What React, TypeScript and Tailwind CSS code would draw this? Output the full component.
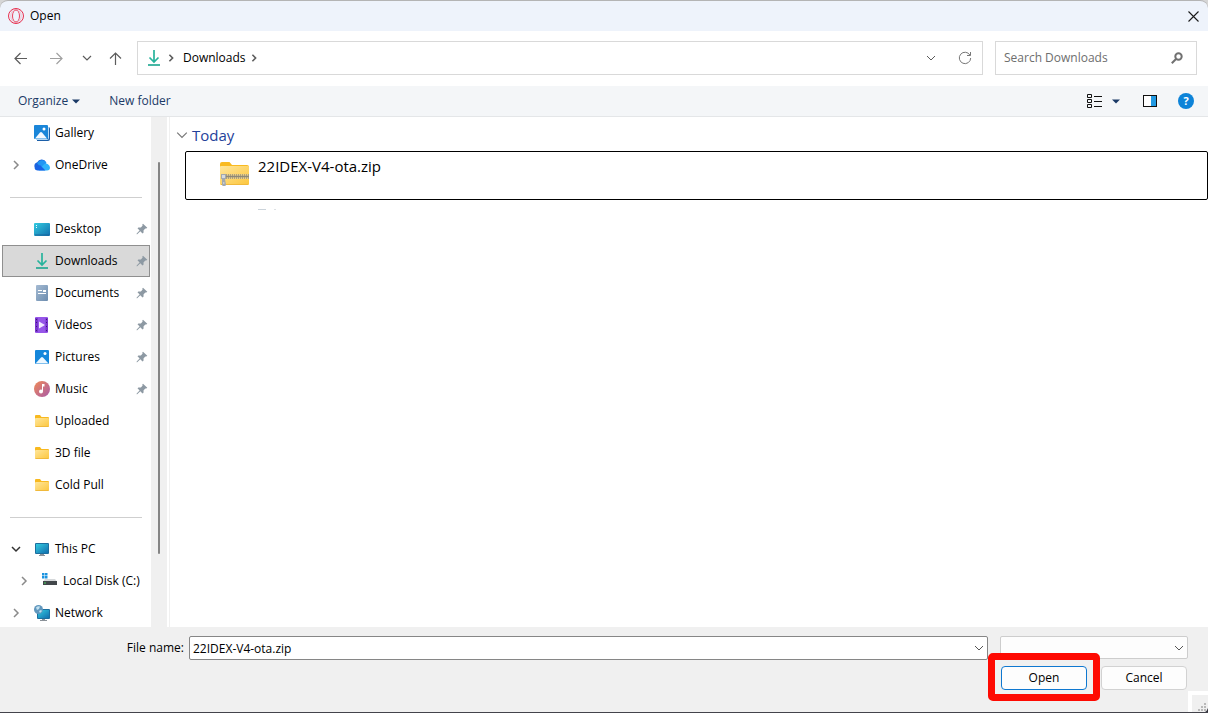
import { useState } from "react";
import type { ReactNode } from "react";

interface ChevronProps {
	direction: "down" | "right";
	size?: number;
	className?: string;
}

const Chevron = ({ direction, size = 10, className }: ChevronProps) => (
	<svg
		className={className}
		width={size}
		height={size}
		viewBox="0 0 10 10"
		fill="none"
		stroke="currentColor"
		aria-hidden="true"
	>
		<path d={direction === "down" ? "M1 3l4 4 4-4" : "M3 1l4 4-4 4"} />
	</svg>
);

const OperaLogo = () => (
	<svg width="16" height="16" viewBox="0 0 16 16" fill="none" stroke="#e8304f" aria-hidden="true">
		<circle cx="8" cy="8" r="7.5" strokeWidth="1" />
		<ellipse cx="8" cy="8" rx="5.2" ry="7" strokeWidth="0.5" opacity="0.5" />
		<ellipse cx="8" cy="8" rx="3.5" ry="6" strokeWidth="0.9" />
	</svg>
);

const GalleryIcon = () => (
	<svg width="16" height="16" viewBox="0 0 16 16" aria-hidden="true">
		<path d="M3 2h11.5A1.5 1.5 0 0 1 16 3.500V14a2 2 0 0 1-2 2H3z" fill="#1b5fa8" />
		<path d="M14.500 2v11.500a1 1 0 0 1-1 1H2" stroke="#b4d8f4" fill="none" />
		<rect width="14" height="14" rx="1" fill="#1a86d9" />
		<circle cx="10" cy="4" r="1.500" fill="#fff" />
		<path d="M1 13.500l5-6q1-1 2 0l5 6z" fill="#f3f9ff" />
	</svg>
);

const OneDriveIcon = () => (
	<svg width="16" height="16" viewBox="0 0 16 16" aria-hidden="true">
		<path d="M4 13a4 4 0 0 1-.8-7.800A5 5 0 0 1 12.200 5.600L8 13z" fill="#1c63dd" />
		<path d="M5 4.200A5 5 0 0 1 12.500 6L7 11 3 6z" fill="#2196f3" />
		<path d="M4.500 13.500L10 7.200a4 4 0 0 1 6 3.300 3 3 0 0 1-3 3z" fill="#30b3fb" />
		<path d="M.5 11.500L6 8l5.500 5.500H4a3.500 3.500 0 0 1-3.500-2z" fill="#1763e6" />
	</svg>
);

const DesktopIcon = () => (
	<svg width="16" height="16" viewBox="0 0 16 16" aria-hidden="true">
		<defs>
			<linearGradient id="desktop" x1="0" y1="0" x2="1" y2="1">
				<stop stopColor="#33cbe0" />
				<stop offset="1" stopColor="#126fae" />
			</linearGradient>
		</defs>
		<rect y="2" width="16" height="13" rx="1" fill="url(#desktop)" />
		<path d="M2 4h1v1H2zM2 6h1v1H2z" fill="#e8fbff" />
		<path d="M1 14h14" stroke="#1a669c" />
	</svg>
);

const DownloadIcon = () => (
	<svg width="16" height="16" viewBox="0 0 16 16" fill="none" aria-hidden="true">
		<path d="M8 0v12M3.500 7.500L8 12l4.500-4.500" stroke="#27b39c" strokeWidth="1.700" />
		<path d="M2 15h12" stroke="#1aa58f" strokeWidth="1.600" />
	</svg>
);

const DocumentIcon = () => (
	<svg width="16" height="16" viewBox="0 0 16 16" aria-hidden="true">
		<defs>
			<linearGradient id="document" x1="0" y1="0" x2="1" y2="1">
				<stop stopColor="#a5bbd3" />
				<stop offset="1" stopColor="#6c8cae" />
			</linearGradient>
		</defs>
		<rect x="2" width="12" height="16" rx="1" fill="url(#document)" />
		<path d="M4 5.500h4M4 8.500h8" stroke="#fff" />
		<path d="M9 5h3v2H9z" fill="#fff" />
	</svg>
);

const VideoIcon = () => (
	<svg width="16" height="16" viewBox="0 0 16 16" aria-hidden="true">
		<rect x="1" width="13" height="16" rx="1" fill="#9656e8" />
		<path d="M1 1h3v14H1zM11.500 1h2.500v14h-2.500z" fill="#7a36cf" />
		<path
			d="M2 2h1v1H2zM2 5h1v1H2zM2 9h1v1H2zM2 13h1v1H2zM12 2h1v1h-1zM12 5h1v1h-1zM12 9h1v1h-1zM12 13h1v1h-1z"
			fill="#401a78"
		/>
		<path d="M5 4.500L11 8l-6 3.500z" fill="#f1e7ff" />
	</svg>
);

const PictureIcon = () => (
	<svg width="16" height="16" viewBox="0 0 16 16" aria-hidden="true">
		<rect x="1" y="1" width="14" height="14" rx="1" fill="#1587db" />
		<circle cx="11" cy="4.500" r="1.500" fill="#fff" />
		<path d="M1.500 14.500l5.500-6q1-1 2 0l5.500 6z" fill="#eef8ff" />
	</svg>
);

const MusicIcon = () => (
	<svg width="16" height="16" viewBox="0 0 16 16" aria-hidden="true">
		<defs>
			<linearGradient id="music" x1="0" y1="0" x2="1" y2="1">
				<stop stopColor="#f08a56" />
				<stop offset="1" stopColor="#a95ba9" />
			</linearGradient>
		</defs>
		<circle cx="8" cy="8" r="8" fill="url(#music)" />
		<circle cx="7" cy="10.500" r="2" fill="#fff" />
		<path d="M8 3h2.500v2.500H9V10.500H8z" fill="#fff" />
	</svg>
);

const FolderIcon = () => (
	<svg width="16" height="16" viewBox="0 0 16 16" aria-hidden="true">
		<defs>
			<linearGradient id="folder" x1="0" y1="0" x2="1" y2="1">
				<stop stopColor="#ffe69a" />
				<stop offset="1" stopColor="#fcc63d" />
			</linearGradient>
		</defs>
		<path d="M1 3a1 1 0 0 1 1-1h4l1.500 2H14a1 1 0 0 1 1 1v3H1z" fill="#f8b91f" />
		<rect x="1" y="5" width="14" height="9" rx="1" fill="url(#folder)" />
		<path d="M1.500 13.500h13" stroke="#f0b93c" />
	</svg>
);

const PcIcon = () => (
	<svg width="16" height="16" viewBox="0 0 16 16" aria-hidden="true">
		<path d="M6 13h4v1H6zM5 14h6v1H5z" fill="#8b9299" />
		<rect x="1" y="2" width="14" height="11" rx="1" fill="#1b6f9f" />
		<rect x="2" y="3" width="12" height="9" fill="url(#desktop)" />
	</svg>
);

const DiskIcon = () => (
	<svg width="16" height="16" viewBox="0 0 16 16" aria-hidden="true">
		<path d="M0 0h2.500v2.500H0zM3 0h2.500v2.500H3zM0 3h2.500v2.500H0zM3 3h2.500v2.500H3z" fill="#1b93e0" />
		<path d="M3 6h10l2 2.500H1z" fill="#d5d8da" />
		<rect x="1" y="8" width="14" height="4" fill="#42474a" />
		<path d="M2 10h2" stroke="#46d160" />
	</svg>
);

const NetworkIcon = () => (
	<svg width="16" height="16" viewBox="0 0 16 16" aria-hidden="true">
		<path d="M8 14h3v1.500H8zM6 15h7v1H6z" fill="#8b9299" />
		<rect x="3" y="4" width="13" height="10" rx="1" fill="#1b6f9f" />
		<rect x="4" y="5" width="11" height="8" fill="url(#desktop)" />
		<circle cx="4.500" cy="4.500" r="4.500" fill="#6197bd" />
		<path d="M2 2.500q2-2 4-1L5 4 3 5zM5 6l2-1 1 1-2 2z" fill="#c1e1f1" />
	</svg>
);

const ZipIcon = () => (
	<svg width="32" height="32" viewBox="0 0 32 32" aria-hidden="true">
		<path d="M1 6a2 2 0 0 1 2-2h7.500L13 7h15a2 2 0 0 1 2 2v6H1z" fill="#f9ba20" />
		<rect x="1" y="8" width="29" height="19" rx="1" fill="url(#folder)" />
		<path d="M2 26.500h27" stroke="#f0b93c" />
		<path d="M7 16h23v5H7z" fill="#e8cf8c" />
		<path d="M7 17h23M7 20h23" stroke="#7b7565" strokeDasharray="1 1" />
		<path d="M7 18.500h23" stroke="#8e8878" strokeWidth="1.500" />
		<path d="M2 16h5v5h-1l1 5.500a1.500 1.500 0 0 1-1 1.500H4a1.500 1.500 0 0 1-1-1.500V21H2z" fill="#a3a9ae" />
		<path d="M3 17h3v3H3zM4.300 24h1v2h-1z" fill="#d6dadd" />
	</svg>
);

const PinIcon = () => (
	<svg width="12" height="12" viewBox="0 0 12 12" aria-hidden="true">
		<path
			d="M7 .8L11.300 4.800l-1 .8-.9-.1L7.600 7.300l-.1 2.400-1 .9L4.300 8.300 1.200 11.300.6 11.300.7 10.500 3.600 7.600 1.500 5.300l.9-.9 2.500 0L6.600 2.600 6.300 1.500z"
			fill="#8d99a3"
		/>
	</svg>
);

const arrowPaths = {
	back: "M1 6.500h12M6.500 1L1 6.500 6.500 12",
	forward: "M0 6.500h12M6.500 1L12 6.500 6.500 12",
	up: "M6.500 1v12M1 6.500L6.500 1 12 6.500",
};

const Arrow = ({ kind }: { kind: keyof typeof arrowPaths }) => (
	<svg width="13" height="13" viewBox="0 0 13 13" fill="none" stroke="currentColor" aria-hidden="true">
		<path d={arrowPaths[kind]} strokeWidth="1.200" />
	</svg>
);

interface SidebarItem {
	name: string;
	icon: ReactNode;
	pinned?: boolean;
	nested?: boolean;
	expand?: "open" | "closed";
}

const groups: SidebarItem[][] = [
	[
		{ name: "Gallery", icon: <GalleryIcon /> },
		{ name: "OneDrive", icon: <OneDriveIcon />, expand: "closed" },
	],
	[
		{ name: "Desktop", icon: <DesktopIcon />, pinned: true },
		{ name: "Downloads", icon: <DownloadIcon />, pinned: true },
		{ name: "Documents", icon: <DocumentIcon />, pinned: true },
		{ name: "Videos", icon: <VideoIcon />, pinned: true },
		{ name: "Pictures", icon: <PictureIcon />, pinned: true },
		{ name: "Music", icon: <MusicIcon />, pinned: true },
		{ name: "Uploaded", icon: <FolderIcon /> },
		{ name: "3D file", icon: <FolderIcon /> },
		{ name: "Cold Pull", icon: <FolderIcon /> },
	],
	[
		{ name: "This PC", icon: <PcIcon />, expand: "open" },
		{ name: "Local Disk (C:)", icon: <DiskIcon />, expand: "closed", nested: true },
		{ name: "Network", icon: <NetworkIcon />, expand: "closed" },
	],
];

const Sidebar = () => {
	const [selected, setSelected] = useState("Downloads");

	return (
		<nav className="w-[151px] shrink-0 overflow-hidden bg-white">
			{groups.map((group, index) => (
				<div key={index}>
					{index > 0 && (
						<div className="flex h-8 items-center pl-[10px] pr-[9px]">
							<hr className="w-full border-[#cfcfcf]" />
						</div>
					)}
					<ul>
						{group.map((item) => (
							<li key={item.name} className="pl-[2px] pr-px">
								<button
									type="button"
									onClick={() => setSelected(item.name)}
									className={`flex h-8 w-full items-center border pr-px text-left ${
										item.nested ? "pl-4" : "pl-2"
									} ${
										selected === item.name
											? "border-[#8f8f8f] bg-[#d9d9d9]"
											: "border-transparent"
									}`}
								>
									<span className="flex w-[23px] shrink-0">
										{item.expand && (
											<Chevron
												direction={item.expand === "open" ? "down" : "right"}
												className={
													item.expand === "open"
														? "stroke-[1.5] text-[#333]"
														: "stroke-[1.5] text-[#8a8a8a]"
												}
											/>
										)}
									</span>
									{item.icon}
									<span className="ml-[5px] whitespace-nowrap">{item.name}</span>
									{item.pinned && (
										<span className="ml-auto">
											<PinIcon />
										</span>
									)}
								</button>
							</li>
						))}
					</ul>
				</div>
			))}
		</nav>
	);
};

const TitleBar = () => (
	<header className="flex h-[31px] shrink-0 items-center rounded-t-lg border-t border-[#b4b4b4] bg-[#eef3fb] px-2">
		<OperaLogo />
		<h1 className="ml-[6px]">Open</h1>
		<button type="button" aria-label="Close" className="ml-auto p-px">
			<svg width="11" height="11" viewBox="0 0 11 11" stroke="#1a1a1a" strokeWidth="1.100" aria-hidden="true">
				<path d="M.5.5l10 10M10.500.5l-10 10" />
			</svg>
		</button>
	</header>
);

const NavBar = () => (
	<div className="flex h-[55px] shrink-0 items-start bg-white pl-[14px] pr-[11px] pt-[10px]">
		<div className="flex h-[34px] w-[123px] shrink-0 items-center text-[#5c5c5c]">
			<button type="button" aria-label="Back" className="w-9">
				<Arrow kind="back" />
			</button>
			<button type="button" aria-label="Forward" className="w-8 text-[#a0a0a0]">
				<Arrow kind="forward" />
			</button>
			<button type="button" aria-label="Recent locations" className="w-[27px]">
				<Chevron direction="down" className="stroke-[1.2]" />
			</button>
			<button type="button" aria-label="Up">
				<Arrow kind="up" />
			</button>
		</div>
		<div className="flex h-[34px] flex-1 items-center border border-[#d9d9d9] pl-2 pr-[10px] text-[#5c5c5c]">
			<DownloadIcon />
			<Chevron direction="right" size={8} className="ml-[5px] stroke-2" />
			<a href="#downloads" className="ml-2 mr-1 text-black">
				Downloads
			</a>
			<Chevron direction="right" size={8} className="stroke-2" />
			<button type="button" aria-label="Previous locations" className="ml-auto">
				<Chevron direction="down" />
			</button>
			<button type="button" aria-label="Refresh" className="ml-[22px]">
				<svg width="14" height="14" viewBox="0 0 14 14" fill="none" stroke="#777" aria-hidden="true">
					<path d="M12 4.200A5.700 5.700 0 1 0 12.700 7M12.500 1v3.500H9" />
				</svg>
			</button>
		</div>
		<div className="ml-3 flex h-[34px] w-[202px] items-center border border-[#d9d9d9] pl-2 pr-[13px]">
			<input
				type="search"
				aria-label="Search Downloads"
				placeholder="Search Downloads"
				className="min-w-0 flex-1 outline-none placeholder:text-[#6e6e6e]"
			/>
			<svg width="12" height="12" viewBox="0 0 12 12" fill="none" stroke="#707070" aria-hidden="true">
				<circle cx="7.500" cy="4.500" r="3.200" strokeWidth="2" />
				<path d="M5 7L.8 11.200" strokeWidth="2" />
			</svg>
		</div>
	</div>
);

const Caret = () => (
	<svg width="8" height="5" viewBox="0 0 8 5" aria-hidden="true">
		<path d="M0 .5h8L4 4.500z" fill="#1b3a66" />
	</svg>
);

const Toolbar = () => (
	<div className="flex h-[31px] shrink-0 items-center border-b border-[#e4e6e8] bg-[#f4f6f8] pl-[18px] pr-[14px] text-[#1b3a66]">
		<button type="button" className="flex items-center gap-1">
			Organize
			<Caret />
		</button>
		<button type="button" className="ml-[29px]">
			New folder
		</button>
		<button type="button" aria-label="Change view" className="ml-auto">
			<svg width="15" height="14" viewBox="0 0 15 14" fill="none" stroke="#111" aria-hidden="true">
				<path d="M.5.5h4v3h-4zM.5 5.500h4v3h-4zM.5 10.500h4v3h-4zM7 2.500h8M7 7.500h8M7 12.500h8" />
			</svg>
		</button>
		<button type="button" aria-label="More view options" className="ml-[10px]">
			<Caret />
		</button>
		<button type="button" aria-label="Preview pane" className="ml-[23px]">
			<svg width="14" height="12" viewBox="0 0 14 12" aria-hidden="true">
				<rect x=".5" y=".5" width="13" height="11" fill="#fff" stroke="#111" />
				<path d="M8 1h5v10H8z" fill="#229ae3" />
			</svg>
		</button>
		<button
			type="button"
			aria-label="Help"
			className="ml-[21px] flex size-4 items-center justify-center rounded-full bg-[#0d83d8] text-[11px] font-bold text-white"
		>
			?
		</button>
	</div>
);

const FileList = () => (
	<main className="min-w-0 flex-1 border-l border-[#f0f0f0] bg-white pl-[6px]">
		<button type="button" className="mt-[7px] flex h-[22px] items-center gap-[4px] text-[15px] text-[#24419a]">
			<Chevron direction="down" size={12} className="text-[#777]" />
			<h2>Today</h2>
		</button>
		<ul className="ml-[9px] mt-[5px]">
			<li>
				<button
					type="button"
					className="flex h-[49px] w-full items-start rounded-[2px] border border-black pl-[33px] text-left text-[15px]"
				>
					<span className="mt-[6px]">
						<ZipIcon />
					</span>
					<span className="ml-[7px] mt-[6px]">22IDEX-V4-ota.zip</span>
				</button>
			</li>
		</ul>
		{/* top edge of the next, hidden row */}
		<div className="ml-[82px] mt-[9px] flex gap-2">
			<span className="h-px w-2 bg-[#cbd3da]" />
			<span className="h-px w-[2px] bg-[#dde1e4]" />
		</div>
	</main>
);

const Footer = () => {
	const [fileName, setFileName] = useState("22IDEX-V4-ota.zip");

	return (
		<footer className="relative h-[86px] shrink-0 border-b border-[#43434b] bg-[#f0f0f0] pr-5 pt-[9px]">
			<form onSubmit={(e) => e.preventDefault()}>
				<div className="flex items-start">
					<label htmlFor="file-name" className="w-[184px] py-1 text-right">
						File name:
					</label>
					<div className="ml-[5px] flex h-6 flex-1 items-center rounded-[2px] border border-[#868686] bg-white px-[3px]">
						<input
							id="file-name"
							type="text"
							value={fileName}
							onChange={(e) => setFileName(e.target.value)}
							className="min-w-0 flex-1 pt-px outline-none"
						/>
						<button type="button" aria-label="Recent file names">
							<Chevron direction="down" className="text-[#555]" />
						</button>
					</div>
					<div className="relative ml-3 w-[188px]">
						<select
							aria-label="File type"
							className="h-[23px] w-full appearance-none rounded-[2px] border border-[#cdcdcd] bg-[#fdfdfd]"
						>
							<option value="" />
						</select>
						<Chevron
							direction="down"
							className="pointer-events-none absolute right-1 top-[7px] text-[#555]"
						/>
					</div>
				</div>
				<div className="mt-[6px] flex justify-end gap-[14px] pr-px">
					<div className="relative">
						<button
							type="submit"
							className="h-6 w-[86px] rounded border border-[#0f78d0] bg-[#fdfdfd]"
						>
							Open
						</button>
						<span className="pointer-events-none absolute -inset-x-[13px] -bottom-[11px] -top-[13px] rounded-[5px] border-[7px] border-[#fe0a02]" />
					</div>
					<button type="button" className="h-6 w-[86px] rounded border border-[#d2d2d2] bg-[#fdfdfd]">
						Cancel
					</button>
				</div>
			</form>
			{/* resize grip */}
			<div className="absolute bottom-0 right-0 border-l-4 border-t-4 border-white">
				<svg width="16" height="17" viewBox="0 0 16 17" aria-hidden="true">
					<path
						d="M12 8h2v2h-2zM12 11h2v2h-2zM9 11h2v2H9zM6 14h2v2H6zM9 14h2v2H9zM12 14h2v2h-2z"
						fill="#b9b9b9"
					/>
					<path d="M16 13v4h-3q2-1 3-4z" fill="#33333d" />
				</svg>
			</div>
		</footer>
	);
};

export default function App() {
	return (
		<div className="flex h-screen flex-col overflow-hidden bg-[#d6d6d6] font-['Open_Sans','Noto_Sans',sans-serif] text-[12px] leading-4 text-black">
			<TitleBar />
			<NavBar />
			<Toolbar />
			<div className="flex min-h-0 flex-1 bg-white">
				<Sidebar />
				<div className="mr-[2px] flex w-4 shrink-0 justify-center bg-[#f0f0f0] pb-[73px] pt-[45px]">
					<div className="w-[2px] rounded-full bg-[#858585]" />
				</div>
				<FileList />
			</div>
			<Footer />
		</div>
	);
}
